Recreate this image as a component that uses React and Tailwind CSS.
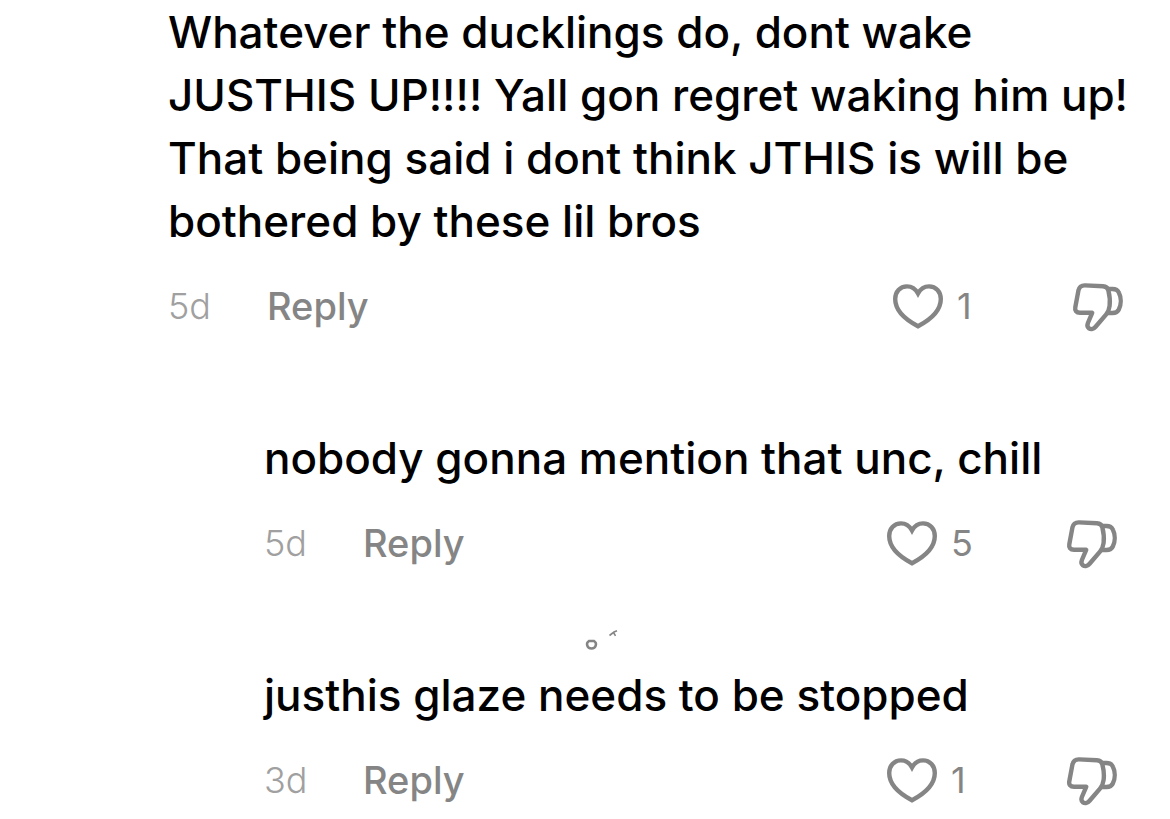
const comments = [
  {
    id: 1,
    text: "Whatever the ducklings do, dont wake\nJUSTHIS UP!!!! Yall gon regret waking him up!\nThat being said i dont think JTHIS is will be\nbothered by these lil bros",
    time: "5d",
    likes: 1,
  },
  {
    id: 2,
    text: "nobody gonna mention that unc, chill",
    time: "5d",
    likes: 5,
    nested: true,
  },
  {
    id: 3,
    text: "justhis glaze needs to be stopped",
    time: "3d",
    likes: 1,
    nested: true,
    hasMarks: true,
  },
];

const HeartIcon = () => (
  <svg
    className="h-12 w-[50px]"
    viewBox="0 0 50 48"
    fill="none"
    stroke="currentColor"
    strokeWidth="4.4"
    aria-hidden="true"
  >
    <path d="M25 11.5C22.5 7 18.6 4.4 14 4.4C7 4.4 2.2 9.7 2.2 17C2.2 29 13.5 38.2 25 44.2C36.5 38.2 47.8 29 47.8 17C47.8 9.7 43 4.4 36 4.4C31.4 4.4 27.5 7 25 11.5Z" />
  </svg>
);

const ThumbDownIcon = () => (
  <svg
    className="h-12 w-[50px] overflow-visible"
    viewBox="0 0 50 48"
    fill="none"
    stroke="currentColor"
    strokeWidth="4.4"
    strokeLinejoin="round"
    aria-hidden="true"
  >
    <path d="M12 3.4L30 4.2C33.2 4.4 34.8 5.8 35.4 8.6C36.8 14 37.2 19.5 36.6 24C36.2 27.4 35.2 30 33 32.6L22.6 44.8C20.8 47 18 47.8 16 46.4C14.4 45.2 14.1 43.2 14.9 41L19.2 30.8L7 30.8C3.4 30.7 1.6 28.6 2.3 25.2L5.4 8.6C6.2 5 8.4 3.3 12 3.4Z" />
    <path d="M35 7H39.4C42.8 7 44.8 8 45.9 10.8C48.3 15.5 48.3 22.3 45.9 27.3C44.8 30 42.8 31 39.4 31H34.5" />
  </svg>
);

// leftovers of the name line above the last reply
const NameMarks = () => (
  <svg
    className="absolute -top-[37px] left-80 h-6 w-9"
    viewBox="0 0 36 24"
    fill="none"
    stroke="#858585"
    aria-hidden="true"
  >
    <path
      d="M5 14H10C11.8 15.2 12.3 16.8 11.8 18.4C11.2 20.6 9.6 21.6 7.5 21.6C5.4 21.6 3.8 20.6 3.2 18.4C2.7 16.8 3.2 15.2 5 14Z"
      strokeWidth="2.5"
    />
    <path d="M25.5 8.5L30 5L33 3.8M29.5 5.5L31.5 8.8" strokeWidth="1.6" />
  </svg>
);

const Comment = ({ comment }) => {
  const { text, time, likes, nested, hasMarks } = comment;

  return (
    <article className={nested ? "pl-[264px]" : "pl-[168px]"}>
      <div className="relative">
        {hasMarks && <NameMarks />}
        <p className="whitespace-pre-line text-[44px] font-medium leading-[63px] text-black">
          {text}
        </p>
      </div>
      <div
        className={
          nested
            ? "mt-[29px] flex h-12 items-center pr-[53px]"
            : "mt-[29px] flex h-12 items-center pr-[47px]"
        }
      >
        <time className="w-[99px] text-[36px] font-light leading-[48px] text-[#a0a0a0]">
          {time}
        </time>
        <button
          type="button"
          className="text-[38px] font-medium leading-[48px] text-[#858585]"
        >
          Reply
        </button>
        <button
          type="button"
          aria-label="Like"
          className="ml-auto flex w-[180px] items-center gap-3.5 text-[36px] leading-[48px] text-[#858585]"
        >
          <HeartIcon />
          <span>{likes}</span>
        </button>
        <button type="button" aria-label="Dislike" className="text-[#858585]">
          <ThumbDownIcon />
        </button>
      </div>
    </article>
  );
};

const App = () => {
  return (
    <main className="flex min-h-screen flex-col gap-[97px] bg-white pt-px font-['Inter',sans-serif]">
      {comments.map((comment) => (
        <Comment key={comment.id} comment={comment} />
      ))}
    </main>
  );
};

export default App;
